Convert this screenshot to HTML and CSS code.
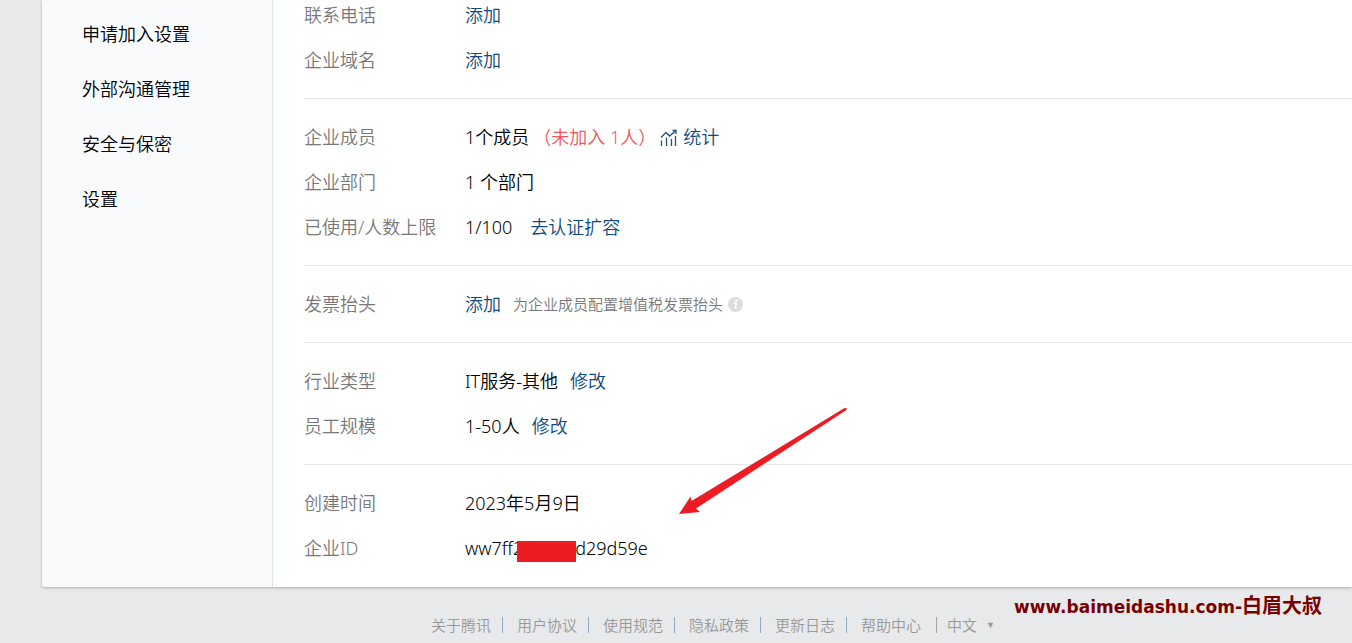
FILE: index.html
```
<!DOCTYPE html>
<html lang="zh-CN">
<head>
    <meta charset="utf-8">
    <title>企业信息</title>
    <link rel="stylesheet" href="styles.css">
</head>
<body>
    <div class="card">
        <nav class="sidebar">
            <a href="#">申请加入设置</a>
            <a href="#">外部沟通管理</a>
            <a href="#">安全与保密</a>
            <a href="#">设置</a>
        </nav>

        <main class="content">
            <dl class="section">
                <div class="row">
                    <dt>联系电话</dt>
                    <dd><a href="#">添加</a></dd>
                </div>
                <div class="row">
                    <dt>企业域名</dt>
                    <dd><a href="#">添加</a></dd>
                </div>
            </dl>

            <dl class="section">
                <div class="row">
                    <dt>企业成员</dt>
                    <dd class="members">
                        <span>1个成员</span>
                        <span class="warn">（未加入 1人）</span>
                        <a href="#" class="stat">
                            <svg width="18" height="18" viewBox="0 0 18 18" fill="none" stroke="#1f5078">
                                <path d="M1 8.5L6 3.5L9.5 7L15.5 2" stroke-width="1.3"/>
                                <path d="M12.5 1.5H16V5" stroke-width="1.3"/>
                                <path d="M1.5 11.5V17M6.5 8.5V17M11.5 10V17M15.5 7V17" stroke-width="1.3"/>
                            </svg>
                            统计
                        </a>
                    </dd>
                </div>
                <div class="row">
                    <dt>企业部门</dt>
                    <dd>1 个部门</dd>
                </div>
                <div class="row">
                    <dt>已使用/人数上限</dt>
                    <dd class="wide">1/100 <a href="#">去认证扩容</a></dd>
                </div>
            </dl>

            <dl class="section">
                <div class="row">
                    <dt>发票抬头</dt>
                    <dd>
                        <a href="#">添加</a>
                        <span class="hint">
                            为企业成员配置增值税发票抬头
                            <svg width="15" height="15" viewBox="0 0 15 15">
                                <circle cx="7.5" cy="7.5" r="7.5" fill="#dcdddf"/>
                                <circle cx="8.4" cy="3.8" r="1.2" fill="#fff"/>
                                <path d="M6 6.3H8.3L7.2 11.2H8.6" fill="none" stroke="#fff" stroke-width="1.4"/>
                            </svg>
                        </span>
                    </dd>
                </div>
            </dl>

            <dl class="section">
                <div class="row">
                    <dt>行业类型</dt>
                    <dd>IT服务-其他 <a href="#">修改</a></dd>
                </div>
                <div class="row">
                    <dt>员工规模</dt>
                    <dd>1-50人 <a href="#">修改</a></dd>
                </div>
            </dl>

            <dl class="section">
                <div class="row">
                    <dt>创建时间</dt>
                    <dd>2023年5月9日</dd>
                </div>
                <div class="row">
                    <dt>企业ID</dt>
                    <dd class="corp-id"><span>ww7ff2</span><span class="mask"></span><span>d29d59e</span></dd>
                </div>
            </dl>
        </main>

        <svg class="arrow" width="170" height="108" viewBox="0 0 170 108">
            <path d="M1 107L12.5 89.5L13.5 94L166.5 1L169 1.5L168.5 3L18 101.5L22 105Z" fill="#ed1c24"/>
        </svg>
    </div>

    <footer class="footer">
        <a href="#">关于腾讯</a>
        <a href="#">用户协议</a>
        <a href="#">使用规范</a>
        <a href="#">隐私政策</a>
        <a href="#">更新日志</a>
        <a href="#">帮助中心</a>
        <label class="lang">
            <select aria-label="语言">
                <option>中文</option>
            </select>
            <span class="caret">▼</span>
        </label>
    </footer>

    <div class="watermark">www.baimeidashu.com-<span>白眉大叔</span></div>
</body>
</html>
```

FILE: styles.css
```
body {
    margin: 0;
    background: #e8e9eb;
    color: #000;
    font-family: "Noto Sans", "Noto Sans CJK SC", sans-serif;
    font-size: 18px;
    font-weight: 350;
    overflow: hidden;
    position: relative;
}

a {
    color: #0f4a7c;
    text-decoration: none;
}

.card {
    display: flex;
    position: relative;
    margin-left: 42px;
    background: #fff;
    border-radius: 0 0 0 4px;
    box-shadow: 0 1px 3px rgba(0, 0, 0, 0.25);
}

.sidebar {
    width: 230px;
    padding-top: 7px;
    background: #f9fafc;
    border-right: 1px dotted #c5d3df;
    border-radius: 0 0 0 4px;
}

.sidebar a {
    display: block;
    padding-left: 40px;
    line-height: 55px;
    color: #000;
}

.content {
    flex: 1;
    margin-top: -7px;
    padding-left: 31px;
}

.section {
    margin: 0;
    padding: 16px 0 15px;
    border-top: 1px solid #e4e6e9;
}

.section:first-child {
    padding-top: 0;
    border-top: 0;
}

.section:last-child {
    padding-bottom: 16px;
}

.row {
    display: flex;
    height: 45px;
    line-height: 45px;
    white-space: nowrap;
}

.row dt {
    width: 161px;
    color: #787878;
}

.row dd {
    display: flex;
    align-items: center;
    gap: 12px;
    margin: 0;
}

.row .members {
    gap: 4px;
}

.row .wide {
    gap: 18px;
}

.warn {
    color: #f0565a;
}

.stat {
    display: flex;
    align-items: center;
    gap: 5px;
}

.hint {
    display: flex;
    align-items: center;
    gap: 5px;
    font-size: 15px;
    color: #787878;
}

.row .corp-id {
    gap: 0;
}

/* covers part of the id */
.mask {
    position: relative;
    width: 59px;
    height: 21px;
    margin: 6px -1px 0 -6px;
    background: #ed1c24;
}

.arrow {
    position: absolute;
    left: 636px;
    top: 407px;
}

.footer {
    display: flex;
    align-items: center;
    padding: 27px 0 6px 431px;
    font-size: 15px;
    line-height: 22px;
    white-space: nowrap;
}

.footer a {
    display: flex;
    align-items: center;
    color: #999;
}

.footer a::after {
    content: "";
    width: 1px;
    height: 16px;
    margin: 0 14px 0 11px;
    background: #93a8c3;
}

.footer a:last-of-type::after {
    margin: 0 10px 0 15px;
    background: #a5a5a5;
}

.lang {
    display: flex;
    align-items: center;
    gap: 8px;
    color: #999;
}

.lang select {
    appearance: none;
    padding: 0;
    border: 0;
    background: none;
    color: #999;
    font: inherit;
}

.caret {
    font-family: "DejaVu Sans", sans-serif;
    font-size: 9px;
}

.watermark {
    position: absolute;
    right: 30px;
    top: 594px;
    color: #780000;
    font-family: "DejaVu Sans", "Noto Sans CJK SC", sans-serif;
    font-size: 17px;
    font-weight: bold;
    line-height: 24px;
    white-space: nowrap;
}

.watermark span {
    font-size: 20px;
}
```
